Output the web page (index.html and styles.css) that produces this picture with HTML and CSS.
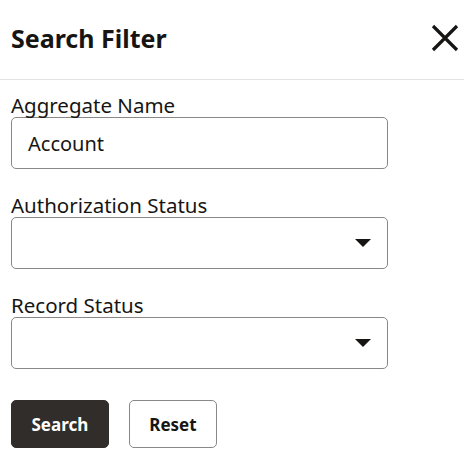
FILE: index.html
```html
<!DOCTYPE html>
<html lang="en">
<head>
  <meta charset="UTF-8">
  <title>Search Filter</title>
  <link rel="stylesheet" href="styles.css">
</head>
<body>
  <div class="panel">
    <div class="header">
      <h1>Search Filter</h1>
      <button class="close" aria-label="Close">
        <svg width="28" height="28" viewBox="0 0 28 28"><path d="M2 2 L26 26 M26 2 L2 26" stroke="#161513" stroke-width="3.2" fill="none"/></svg>
      </button>
    </div>

    <div class="body">
      <div class="field">
        <label>Aggregate Name</label>
        <div class="box">Account</div>
      </div>
      <div class="field">
        <label>Authorization Status</label>
        <div class="box select"><span class="arrow"></span></div>
      </div>
      <div class="field">
        <label>Record Status</label>
        <div class="box select"><span class="arrow"></span></div>
      </div>

      <div class="actions">
        <button class="btn primary">Search</button>
        <button class="btn">Reset</button>
      </div>
    </div>
  </div>
</body>
</html>
```

FILE: styles.css
```css
body { margin: 0; background: #fff; font-family: "Noto Sans", sans-serif; color: #161513; }
.panel { width: 464px; }
.header { height: 80px; border-bottom: 1px solid #e4e3e2; display: flex; align-items: center; justify-content: space-between; padding: 0 5px 4px 11px; box-sizing: border-box; }
.header h1 { margin: 0; font-size: 25px; font-weight: bold; }
.close { background: none; border: 0; padding: 0; width: 28px; height: 28px; display: flex; }
.body { padding: 15px 11px 0 11px; }
.field { margin-bottom: 26px; }
.field label { display: block; font-size: 20.5px; line-height: 20px; margin-bottom: 2px; }
.box { width: 377px; height: 52px; box-sizing: border-box; border: 1px solid #8a8886; border-radius: 5px; padding: 0 16px; font-size: 20px; display: flex; align-items: center; }
.select { justify-content: flex-end; }
.arrow { width: 0; height: 0; border-left: 8px solid transparent; border-right: 8px solid transparent; border-top: 8px solid #161513; }
.actions { display: flex; gap: 20px; padding-top: 5px; }
.btn { height: 48px; padding: 0 19.5px; border: 1px solid #8a8886; border-radius: 5px; background: #fff; color: #161513; font-family: inherit; font-size: 17px; font-weight: bold; }
.primary { background: #312d2a; border-color: #312d2a; color: #fff; }
```
